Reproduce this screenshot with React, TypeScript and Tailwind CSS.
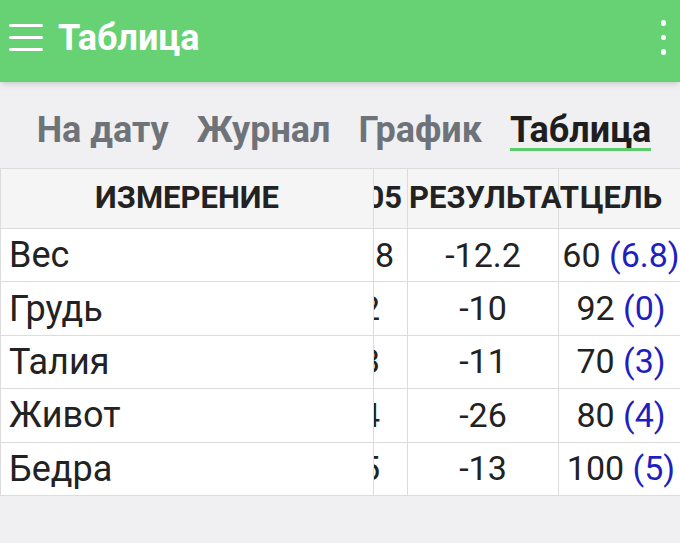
type Row = { name: string; date: string; result: string; goal: string; left: string };

const rows: Row[] = [
  { name: 'Вес', date: '66.8', result: '-12.2', goal: '60', left: '6.8' },
  { name: 'Грудь', date: '92', result: '-10', goal: '92', left: '0' },
  { name: 'Талия', date: '73', result: '-11', goal: '70', left: '3' },
  { name: 'Живот', date: '84', result: '-26', goal: '80', left: '4' },
  { name: 'Бедра', date: '95', result: '-13', goal: '100', left: '5' },
];

const tabs = ['На дату', 'Журнал', 'График', 'Таблица'];

const App = () => {
  return (
    <div className="min-h-[543px] w-[680px] overflow-hidden bg-[#f0f0f2] font-['Roboto',sans-serif] text-[#222]">
      {/* App bar */}
      <div className="relative z-10 flex h-[82px] items-center bg-[#67d273] pb-[7px] shadow-md">
        <div className="ml-[9px] flex w-[34px] flex-col gap-[8.5px]">
          <span className="h-[3.5px] rounded-full bg-white" />
          <span className="h-[3.5px] rounded-full bg-white" />
          <span className="h-[3.5px] rounded-full bg-white" />
        </div>
        <h1 className="ml-[15px] text-[36px] font-bold leading-none text-white">Таблица</h1>
        <div className="ml-auto mr-[14px] flex flex-col items-center gap-[9px]">
          <span className="h-[5.5px] w-[5.5px] rounded-full bg-white" />
          <span className="h-[5.5px] w-[5.5px] rounded-full bg-white" />
          <span className="h-[5.5px] w-[5.5px] rounded-full bg-white" />
        </div>
      </div>

      {/* Tabs */}
      <div className="flex justify-center gap-[28px] pl-[8px] pt-[30px] pb-[17px]">
        {tabs.map((t) => {
          const active = t === 'Таблица';
          return (
            <div
              key={t}
              className={
                active
                  ? 'border-b-[3px] border-[#5ccc6a] text-[36px] font-bold leading-[36px] text-[#1e1e1e]'
                  : 'border-b-[3px] border-transparent text-[36px] font-bold leading-[36px] text-[#6e7379]'
              }
            >
              {t}
            </div>
          );
        })}
      </div>

      {/* Table */}
      <div className="border-t border-[#dcdcdc]">
        <div className="flex h-[60px] border-b border-[#dcdcdc] bg-[#f5f5f5] text-[31px] font-bold">
          <div className="relative z-10 flex w-[374px] shrink-0 items-center justify-center border-l border-r border-[#dcdcdc] bg-[#f5f5f5]">
            ИЗМЕРЕНИЕ
          </div>
          <div className="flex w-[34px] shrink-0 items-center justify-end overflow-hidden border-r border-[#dcdcdc]">
            <div className="w-[90px] shrink-0 text-center">12.05</div>
          </div>
          <div className="flex w-[151px] shrink-0 items-center justify-start whitespace-nowrap border-r border-[#dcdcdc] pl-[1px]">
            РЕЗУЛЬТАТ
          </div>
          <div className="flex w-[124px] shrink-0 items-center justify-center">ЦЕЛЬ</div>
        </div>
        {rows.map((r) => (
          <div key={r.name} className="flex h-[53.4px] border-b border-[#dcdcdc] bg-white text-[34px]">
            <div className="flex w-[374px] shrink-0 items-center border-l border-r border-[#dcdcdc] pl-[8px] text-[36px]">
              {r.name}
            </div>
            <div className="flex w-[34px] shrink-0 items-center justify-end overflow-hidden border-r border-[#dcdcdc]">
              <div className="w-[92px] shrink-0 text-center">{r.date}</div>
            </div>
            <div className="flex w-[151px] shrink-0 items-center justify-center border-r border-[#dcdcdc]">
              {r.result}
            </div>
            <div className="flex w-[124px] shrink-0 items-center justify-center whitespace-nowrap">
              {r.goal}&nbsp;<span className="text-[#1f1fc0]">({r.left})</span>
            </div>
          </div>
        ))}
      </div>
    </div>
  );
};

export default App;
